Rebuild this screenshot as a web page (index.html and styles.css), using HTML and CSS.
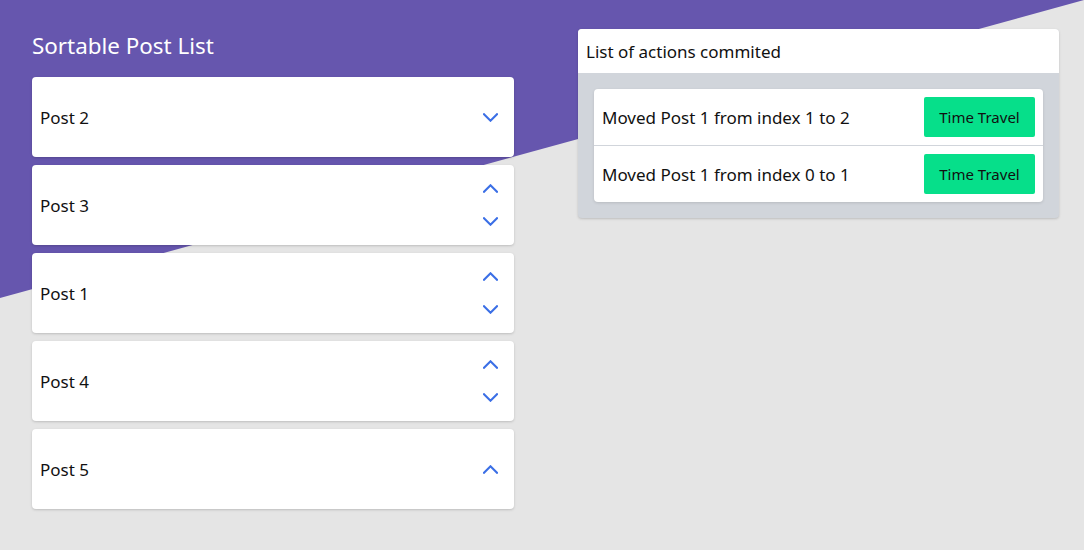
FILE: index.html
```html
<!DOCTYPE html>
<html>
<head>
<meta charset="utf-8">
<link rel="stylesheet" href="styles.css">
</head>
<body>
<div class="backdrop"></div>
<main class="layout">
  <section class="posts">
    <h1 class="title">Sortable Post List</h1>
    <ul class="post-list">
      <li class="post">
        <span class="post-name">Post 2</span>
        <div class="arrows">
          <button class="arrow"><svg width="15" height="9" viewBox="0 0 15 9"><polyline points="1,1.2 7.5,7.7 14,1.2"/></svg></button>
        </div>
      </li>
      <li class="post">
        <span class="post-name">Post 3</span>
        <div class="arrows">
          <button class="arrow up"><svg width="15" height="9" viewBox="0 0 15 9"><polyline points="1,7.8 7.5,1.3 14,7.8"/></svg></button>
          <button class="arrow"><svg width="15" height="9" viewBox="0 0 15 9"><polyline points="1,1.2 7.5,7.7 14,1.2"/></svg></button>
        </div>
      </li>
      <li class="post">
        <span class="post-name">Post 1</span>
        <div class="arrows">
          <button class="arrow up"><svg width="15" height="9" viewBox="0 0 15 9"><polyline points="1,7.8 7.5,1.3 14,7.8"/></svg></button>
          <button class="arrow"><svg width="15" height="9" viewBox="0 0 15 9"><polyline points="1,1.2 7.5,7.7 14,1.2"/></svg></button>
        </div>
      </li>
      <li class="post">
        <span class="post-name">Post 4</span>
        <div class="arrows">
          <button class="arrow up"><svg width="15" height="9" viewBox="0 0 15 9"><polyline points="1,7.8 7.5,1.3 14,7.8"/></svg></button>
          <button class="arrow"><svg width="15" height="9" viewBox="0 0 15 9"><polyline points="1,1.2 7.5,7.7 14,1.2"/></svg></button>
        </div>
      </li>
      <li class="post">
        <span class="post-name">Post 5</span>
        <div class="arrows">
          <button class="arrow"><svg width="15" height="9" viewBox="0 0 15 9"><polyline points="1,7.8 7.5,1.3 14,7.8"/></svg></button>
        </div>
      </li>
    </ul>
  </section>
  <section class="actions">
    <div class="actions-head">List of actions commited</div>
    <div class="actions-body">
      <ul class="action-list">
        <li class="action">
          <span class="action-text">Moved Post 1 from index 1 to 2</span>
          <button class="travel">Time Travel</button>
        </li>
        <li class="action">
          <span class="action-text">Moved Post 1 from index 0 to 1</span>
          <button class="travel">Time Travel</button>
        </li>
      </ul>
    </div>
  </section>
</main>
</body>
</html>
```
FILE: styles.css
```css
* { box-sizing: border-box; }
html, body { margin: 0; padding: 0; }
body {
  width: 1084px;
  height: 550px;
  background: #e5e5e5;
  font-family: "Noto Sans", "Open Sans", sans-serif;
  color: #111;
  position: relative;
  overflow: hidden;
}
.backdrop {
  position: absolute;
  left: 0;
  top: 0;
  width: 1084px;
  height: 298px;
  background: #6656ae;
  clip-path: polygon(0 0, 100% 0, 0 100%);
  z-index: 0;
}
.layout {
  position: relative;
  z-index: 1;
  display: flex;
  align-items: flex-start;
  gap: 64px;
  padding: 29px 0 0 32px;
}
.posts { width: 482px; }
.title {
  margin: 0;
  padding-top: 2px;
  height: 48px;
  font-size: 22.4px;
  line-height: 30px;
  font-weight: 400;
  color: #fff;
}
.post-list {
  list-style: none;
  margin: 0;
  padding: 0;
  display: flex;
  flex-direction: column;
  gap: 8px;
}
.post {
  height: 80px;
  background: #fff;
  border-radius: 4px;
  box-shadow: 0 1px 3px rgba(0,0,0,0.12), 0 1px 2px rgba(0,0,0,0.06);
  display: flex;
  align-items: center;
  justify-content: space-between;
  padding: 0 8px;
}
.post-name { font-size: 17px; }
.arrows {
  display: flex;
  flex-direction: column;
}
.arrow {
  width: 32px;
  height: 33px;
  border: 0;
  padding: 0;
  background: transparent;
  display: flex;
  align-items: center;
  justify-content: center;
}
.arrow.up { padding-bottom: 1px; }
.arrow svg polyline {
  fill: none;
  stroke: #3b6fe6;
  stroke-width: 2.1;
  stroke-linecap: square;
}
.actions {
  width: 481px;
  background: #d1d5db;
  border-radius: 4px;
  box-shadow: 0 1px 3px rgba(0,0,0,0.12), 0 1px 2px rgba(0,0,0,0.06);
  overflow: hidden;
}
.actions-head {
  background: #fff;
  height: 44px;
  display: flex;
  align-items: center;
  padding: 0 8px;
  font-size: 17px;
}
.actions-body { padding: 16px; }
.action-list {
  list-style: none;
  margin: 0;
  padding: 0;
  background: #fff;
  border-radius: 4px;
  box-shadow: 0 1px 3px rgba(0,0,0,0.12);
}
.action {
  height: 56px;
  display: flex;
  align-items: center;
  justify-content: space-between;
  padding: 0 8px;
}
.action + .action { border-top: 1px solid #d1d5db; height: 57px; }
.action-text { font-size: 17px; }
.travel {
  width: 111px;
  height: 40px;
  border: 0;
  border-radius: 2px;
  background: #06df8a;
  color: #111;
  font-family: inherit;
  font-size: 15px;
}
```
